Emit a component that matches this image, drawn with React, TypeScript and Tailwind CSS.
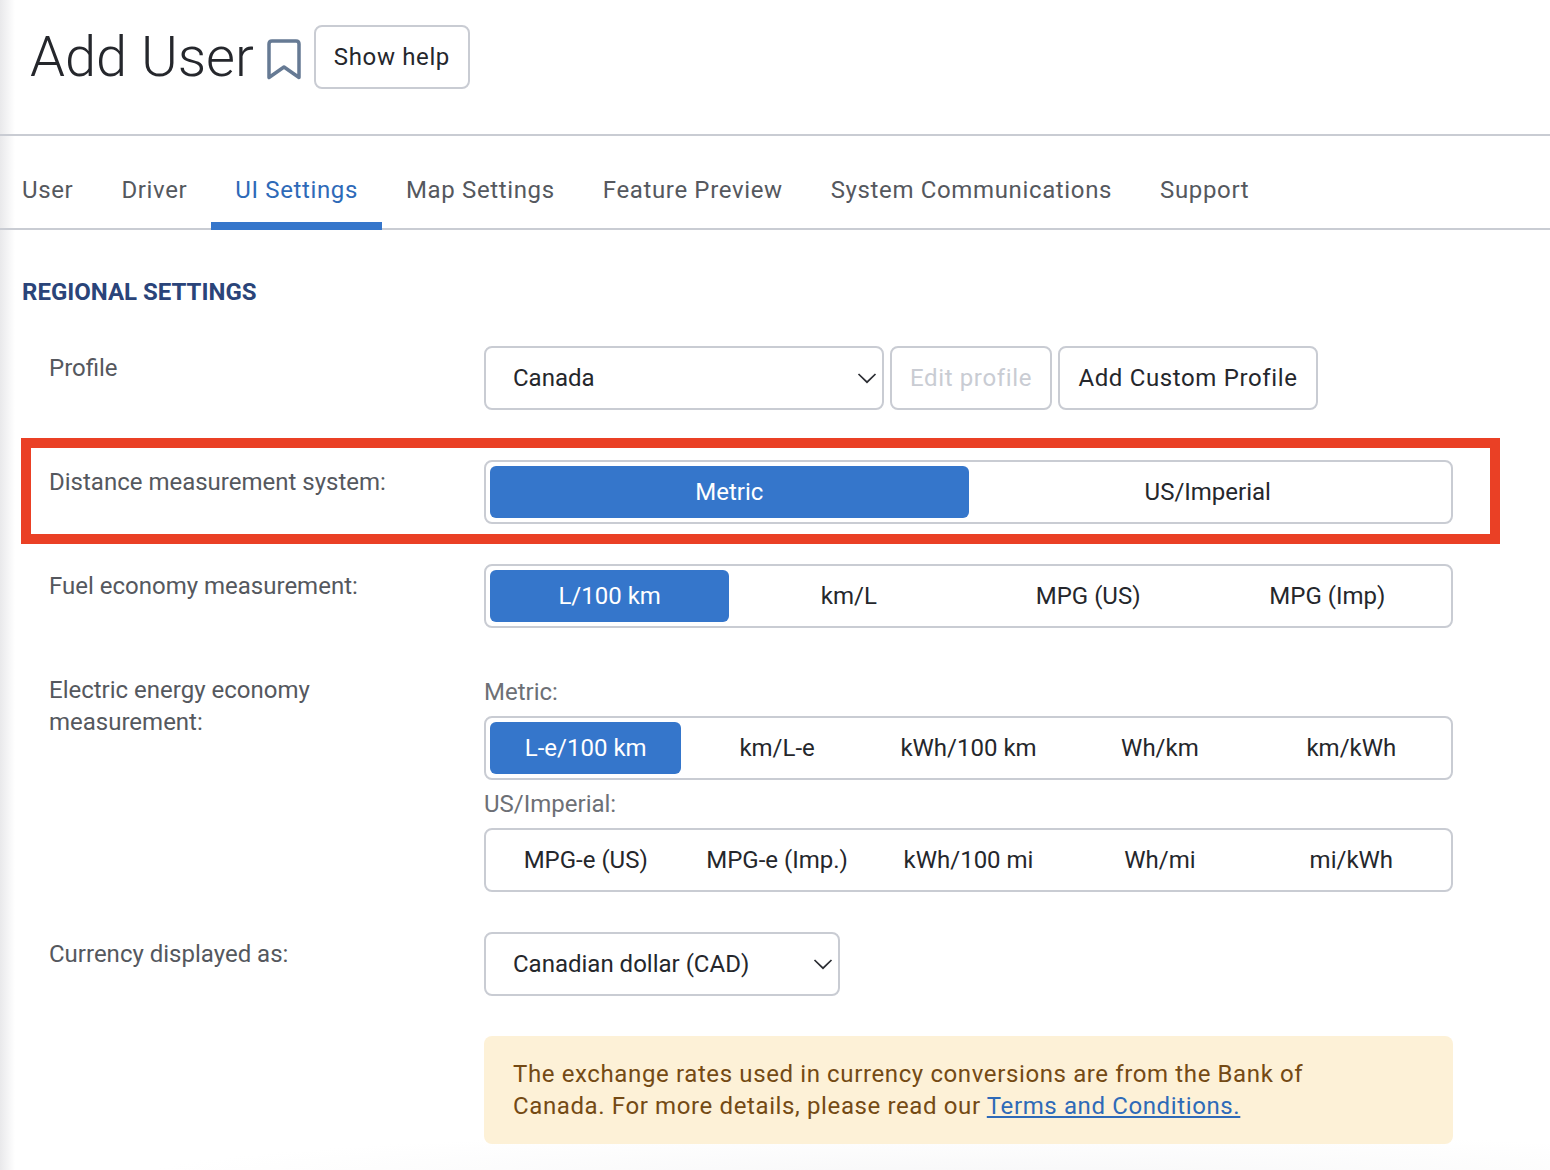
import React from "react";

const TABS = ["User", "Driver", "UI Settings", "Map Settings", "Feature Preview", "System Communications", "Support"];

function Chevron() {
  return (
    <svg width="20" height="12" viewBox="0 0 20 12" fill="none" stroke="#2b2d33" strokeWidth="1.7" className="shrink-0">
      <path d="M1.5 2 L10 10.2 L18.5 2" />
    </svg>
  );
}

function Segments({ items, active }: { items: string[]; active?: number }) {
  return (
    <div className="flex h-16 w-[969px] rounded-lg border-2 border-[#c9ccd3] bg-white p-1 tracking-normal">
      {items.map((item, i) => (
        <div
          key={item}
          className={
            i === active
              ? "flex flex-1 items-center justify-center rounded-md bg-[#3576cb] text-white"
              : "flex flex-1 items-center justify-center text-[#25272c]"
          }
        >
          {item}
        </div>
      ))}
    </div>
  );
}

function Row({ label, children, className, labelClass }: { label: React.ReactNode; children: React.ReactNode; className?: string; labelClass?: string }) {
  return (
    <div className={"flex " + (className || "")}>
      <div className={"w-[462px] shrink-0 pl-[27px] text-[#55585e] leading-8 tracking-normal " + (labelClass || "pt-[6px]")}>{label}</div>
      <div>{children}</div>
    </div>
  );
}

function SelectBox({ value, w, pr }: { value: string; w: string; pr: string }) {
  return (
    <div className={"flex h-16 items-center justify-between rounded-lg border-2 border-[#c9ccd3] bg-white pl-[27px] tracking-normal text-[#25272c] " + w + " " + pr}>
      <span>{value}</span>
      <Chevron />
    </div>
  );
}

export default function App() {
  return (
    <div className="relative h-[1170px] w-[1550px] overflow-hidden bg-white font-['Roboto',sans-serif] text-[24px] tracking-[0.64px]">
      {/* left edge shadow + bottom fade */}
      <div className="absolute inset-y-0 left-0 w-[15px] bg-gradient-to-r from-[#e9e9eb] to-white" />
      <div className="absolute -bottom-[10px] left-[120px] -right-[300px] h-[50px] bg-[radial-gradient(ellipse_at_bottom,#f7f7f8,#ffffff_70%)]" />

      <div className="relative">
        {/* Header */}
        <div className="flex h-[136px] items-start border-b-2 border-[#c9ccd3] pl-[30px] pt-[25px]">
          <h1 className="text-[56px] leading-[64px] font-light tracking-normal text-[#25272c]">Add User</h1>
          <svg width="34" height="41" viewBox="0 0 34 41" fill="none" stroke="#667a94" strokeWidth="3.5" strokeLinejoin="round" className="ml-[13px] mt-[14px]">
            <path d="M2 38.5 V5 Q2 2 5 2 H29 Q32 2 32 5 V38.5 L17 28 Z" />
          </svg>
          <button className="ml-[13px] h-16 w-[156px] rounded-lg border-2 border-[#c9ccd3] bg-white text-[#25272c]">Show help</button>
        </div>

        {/* Tabs */}
        <div className="flex h-[94px] border-b-2 border-[#c9ccd3] pl-[22px]">
          {TABS.map((t, i) => (
            <div
              key={t}
              className={
                t === "UI Settings"
                  ? "relative flex h-[94px] items-center px-6 pt-[14px] text-[#2e6ab8]"
                  : i === 0
                    ? "flex h-[94px] items-center pr-6 pt-[14px] text-[#55585e]"
                    : "flex h-[94px] items-center px-6 pt-[14px] text-[#55585e]"
              }
            >
              {t}
              {t === "UI Settings" && <div className="absolute inset-x-0 bottom-0 h-2 bg-[#3576cb]" />}
            </div>
          ))}
        </div>

        {/* Regional settings */}
        <div className="pl-[22px] pt-[46px]">
          <h2 className="text-[24px] leading-8 font-bold tracking-normal text-[#2a4479]">REGIONAL SETTINGS</h2>

          <Row label="Profile" className="mt-[38px]">
            <div className="flex gap-[6px]">
              <SelectBox value="Canada" w="w-[400px]" pr="pr-[5px]" />
              <div className="flex h-16 w-[162px] items-center justify-center rounded-lg border-2 border-[#c9ccd3] text-[#c9ccd3]">Edit profile</div>
              <div className="flex h-16 w-[260px] items-center justify-center rounded-lg border-2 border-[#c9ccd3] text-[#25272c]">Add Custom Profile</div>
            </div>
          </Row>

          <div className="-ml-px mt-[28px] flex h-[106px] w-[1479px] border-[10px] border-[#ea4025] pt-[12px]">
            <div className="w-[453px] shrink-0 pl-[18px] pt-[6px] text-[#55585e] leading-8 tracking-normal">Distance measurement system:</div>
            <Segments items={["Metric", "US/Imperial"]} active={0} />
          </div>

          <Row label="Fuel economy measurement:" className="mt-[20px]">
            <Segments items={["L/100 km", "km/L", "MPG (US)", "MPG (Imp)"]} active={0} />
          </Row>

          <Row label={<>Electric energy economy<br />measurement:</>} className="mt-[48px]" labelClass="-mt-[2px]">
            <div className="leading-8 tracking-normal text-[#6d7076]">Metric:</div>
            <div className="mt-[8px]">
              <Segments items={["L-e/100 km", "km/L-e", "kWh/100 km", "Wh/km", "km/kWh"]} active={0} />
            </div>
            <div className="mt-[8px] leading-8 tracking-normal text-[#6d7076]">US/Imperial:</div>
            <div className="mt-[8px]">
              <Segments items={["MPG-e (US)", "MPG-e (Imp.)", "kWh/100 mi", "Wh/mi", "mi/kWh"]} />
            </div>
          </Row>

          <Row label="Currency displayed as:" className="mt-[40px]">
            <SelectBox value="Canadian dollar (CAD)" w="w-[356px]" pr="pr-[5px]" />
          </Row>

          <div className="ml-[462px] mt-[40px] h-[108px] w-[969px] rounded-lg bg-[#fdf1d7] pl-[29px] pt-[22px] leading-8 tracking-[0.62px] text-[#744a14]">
            The exchange rates used in currency conversions are from the Bank of
            <br />
            Canada. For more details, please read our{" "}
            <a className="text-[#2e6ab8] underline">Terms and Conditions.</a>
          </div>
        </div>
      </div>
    </div>
  );
}
